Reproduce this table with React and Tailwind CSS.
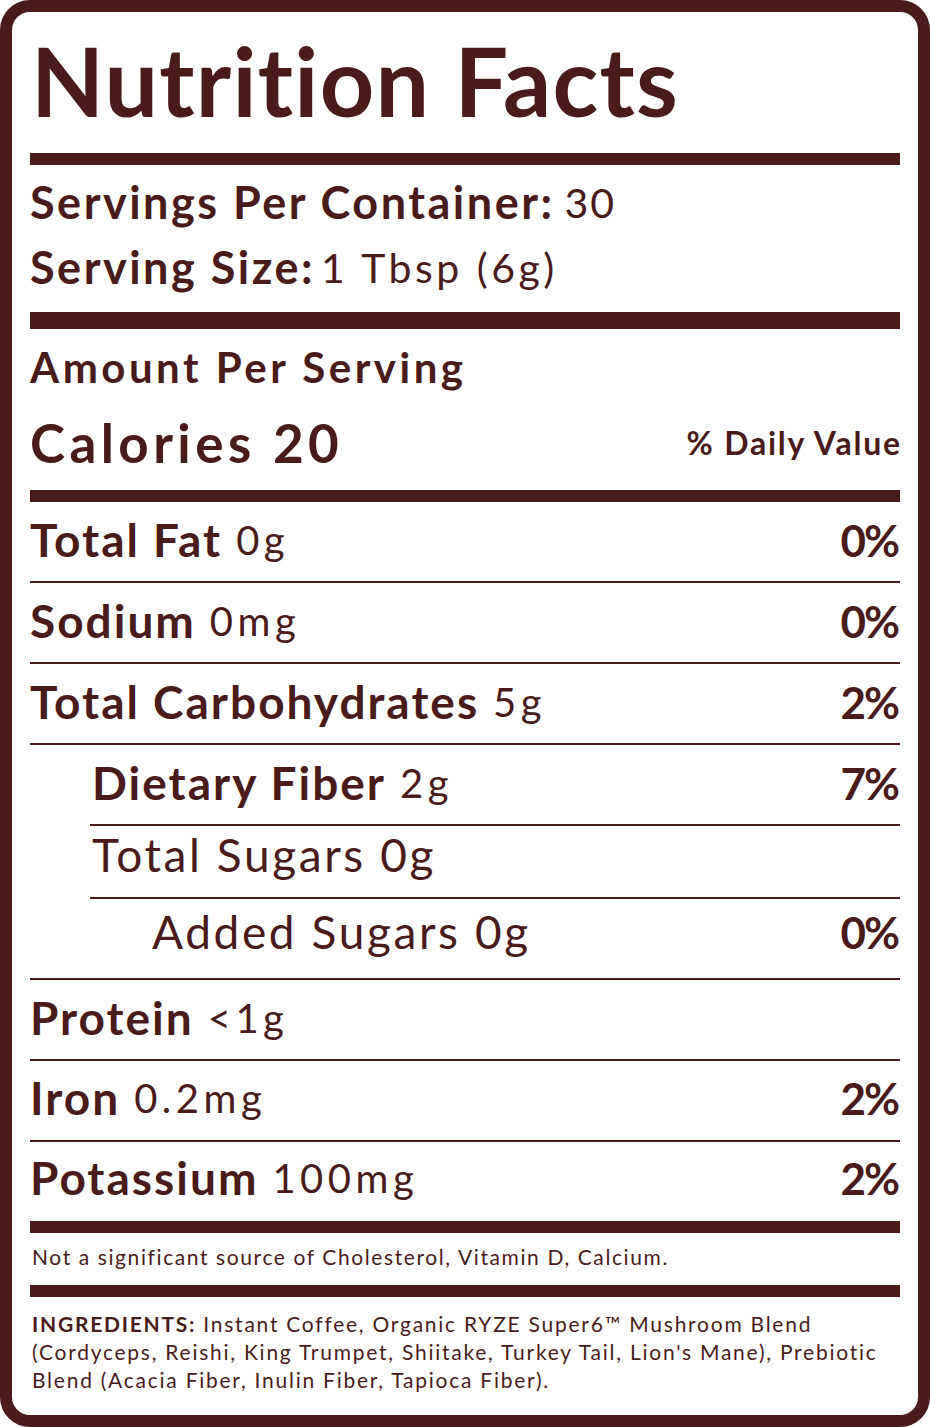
import React from "react";

const C = "text-[#4a1b1b]";

function Pct({ v }) {
  return (
    <span className="text-[44px] leading-[46px] font-bold">
      <span className="tracking-[-2px]">{v}</span>%
    </span>
  );
}

function Row({ label, value, pct, indent = "", labelBold = true, pt = "pt-[15px]", pb = "pb-[18px]", border = true }) {
  return (
    <div className={`${indent} ${pt} ${pb} ${border ? "border-b-2 border-[#4a1b1b]" : ""} flex items-center justify-between`}>
      <div className="flex items-center gap-[14px]">
        <span
          className={`text-[46px] leading-[46px] ${labelBold ? "font-bold tracking-[2px]" : "font-normal tracking-[2.6px]"}`}
        >
          {label}
        </span>
        {value && <span className="text-[40px] leading-[46px] font-normal tracking-[4.5px]">{value}</span>}
      </div>
      {pct && <Pct v={pct} />}
    </div>
  );
}

export default function App() {
  return (
    <div className="w-[930px] h-[1427px] bg-white">
      <div
        className={`w-[930px] h-[1427px] border-[12px] border-[#4a1b1b] rounded-[30px] bg-white px-[18px] ${C} [font-variant-ligatures:none]`}
        style={{ fontFamily: "Lato, 'Liberation Sans', sans-serif" }}
      >
        <div className="pt-[21px]">
          <h1 className="text-[95px] leading-[95px] font-bold pl-[1px] tracking-[1.2px]">Nutrition Facts</h1>
        </div>
        <div className="mt-[25px] h-[12px] bg-[#4a1b1b]" />

        <div className="pt-[5px]">
          <div className="flex items-center gap-[10px] h-[65px]">
            <span className="text-[45px] leading-[45px] font-bold tracking-[2.5px]">Servings Per Container:</span>
            <span className="text-[41px] leading-[45px] font-normal tracking-[2px]">30</span>
          </div>
          <div className="flex items-center gap-[6px] h-[65px]">
            <span className="text-[45px] leading-[45px] font-bold tracking-[2.5px]">Serving Size:</span>
            <span className="text-[41px] leading-[45px] font-normal tracking-[3.5px]">1 Tbsp (6g)</span>
          </div>
        </div>
        <div className="mt-[12px] h-[17px] bg-[#4a1b1b]" />

        <div className="pt-[17px] text-[42px] leading-[42px] font-bold tracking-[3.5px]">Amount Per Serving</div>
        <div className="mt-[28px] flex items-center justify-between h-[53px]">
          <span className="text-[53px] leading-[53px] font-bold tracking-[4.4px]">Calories 20</span>
          <span className="text-[32px] leading-[32px] font-bold tracking-[1.8px] -mr-[2px]">% Daily Value</span>
        </div>
        <div className="mt-[21px] h-[12px] bg-[#4a1b1b]" />

        <Row label="Total Fat" value="0g" pct="0" />
        <Row label="Sodium" value="0mg" pct="0" />
        <Row label="Total Carbohydrates" value="5g" pct="2" />
        <Row label="Dietary Fiber" value="2g" pct="7" indent="ml-[60px] pl-[2px]" />
        <Row label="Total Sugars 0g" labelBold={false} indent="ml-[60px] pl-[2px]" pt="pt-[6px]" pb="pb-[19px]" />
        <Row label="Added Sugars 0g" labelBold={false} pct="0" indent="pl-[122px]" pt="pt-[10px]" pb="pb-[23px]" />
        <Row label="Protein" value="<1g" />
        <Row label="Iron" value="0.2mg" pct="2" pt="pt-[14px]" pb="pb-[19px]" />
        <Row label="Potassium" value="100mg" pct="2" pt="pt-[13px]" pb="pb-[20px]" border={false} />

        <div className="h-[12px] bg-[#4a1b1b]" />
        <div className="pt-[13px] text-[21px] leading-[21px] pl-[2px] tracking-[1.6px]">
          Not a significant source of Cholesterol, Vitamin D, Calcium.
        </div>
        <div className="mt-[18px] h-[12px] bg-[#4a1b1b]" />
        <div className="pt-[13px] text-[21px] leading-[28px] pl-[2px] tracking-[1.75px]">
          <span className="font-bold">INGREDIENTS:</span> Instant Coffee, Organic RYZE Super6™ Mushroom Blend
          <br />
          (Cordyceps, Reishi, King Trumpet, Shiitake, Turkey Tail, Lion's Mane), Prebiotic
          <br />
          Blend (Acacia Fiber, Inulin Fiber, Tapioca Fiber).
        </div>
      </div>
    </div>
  );
}
